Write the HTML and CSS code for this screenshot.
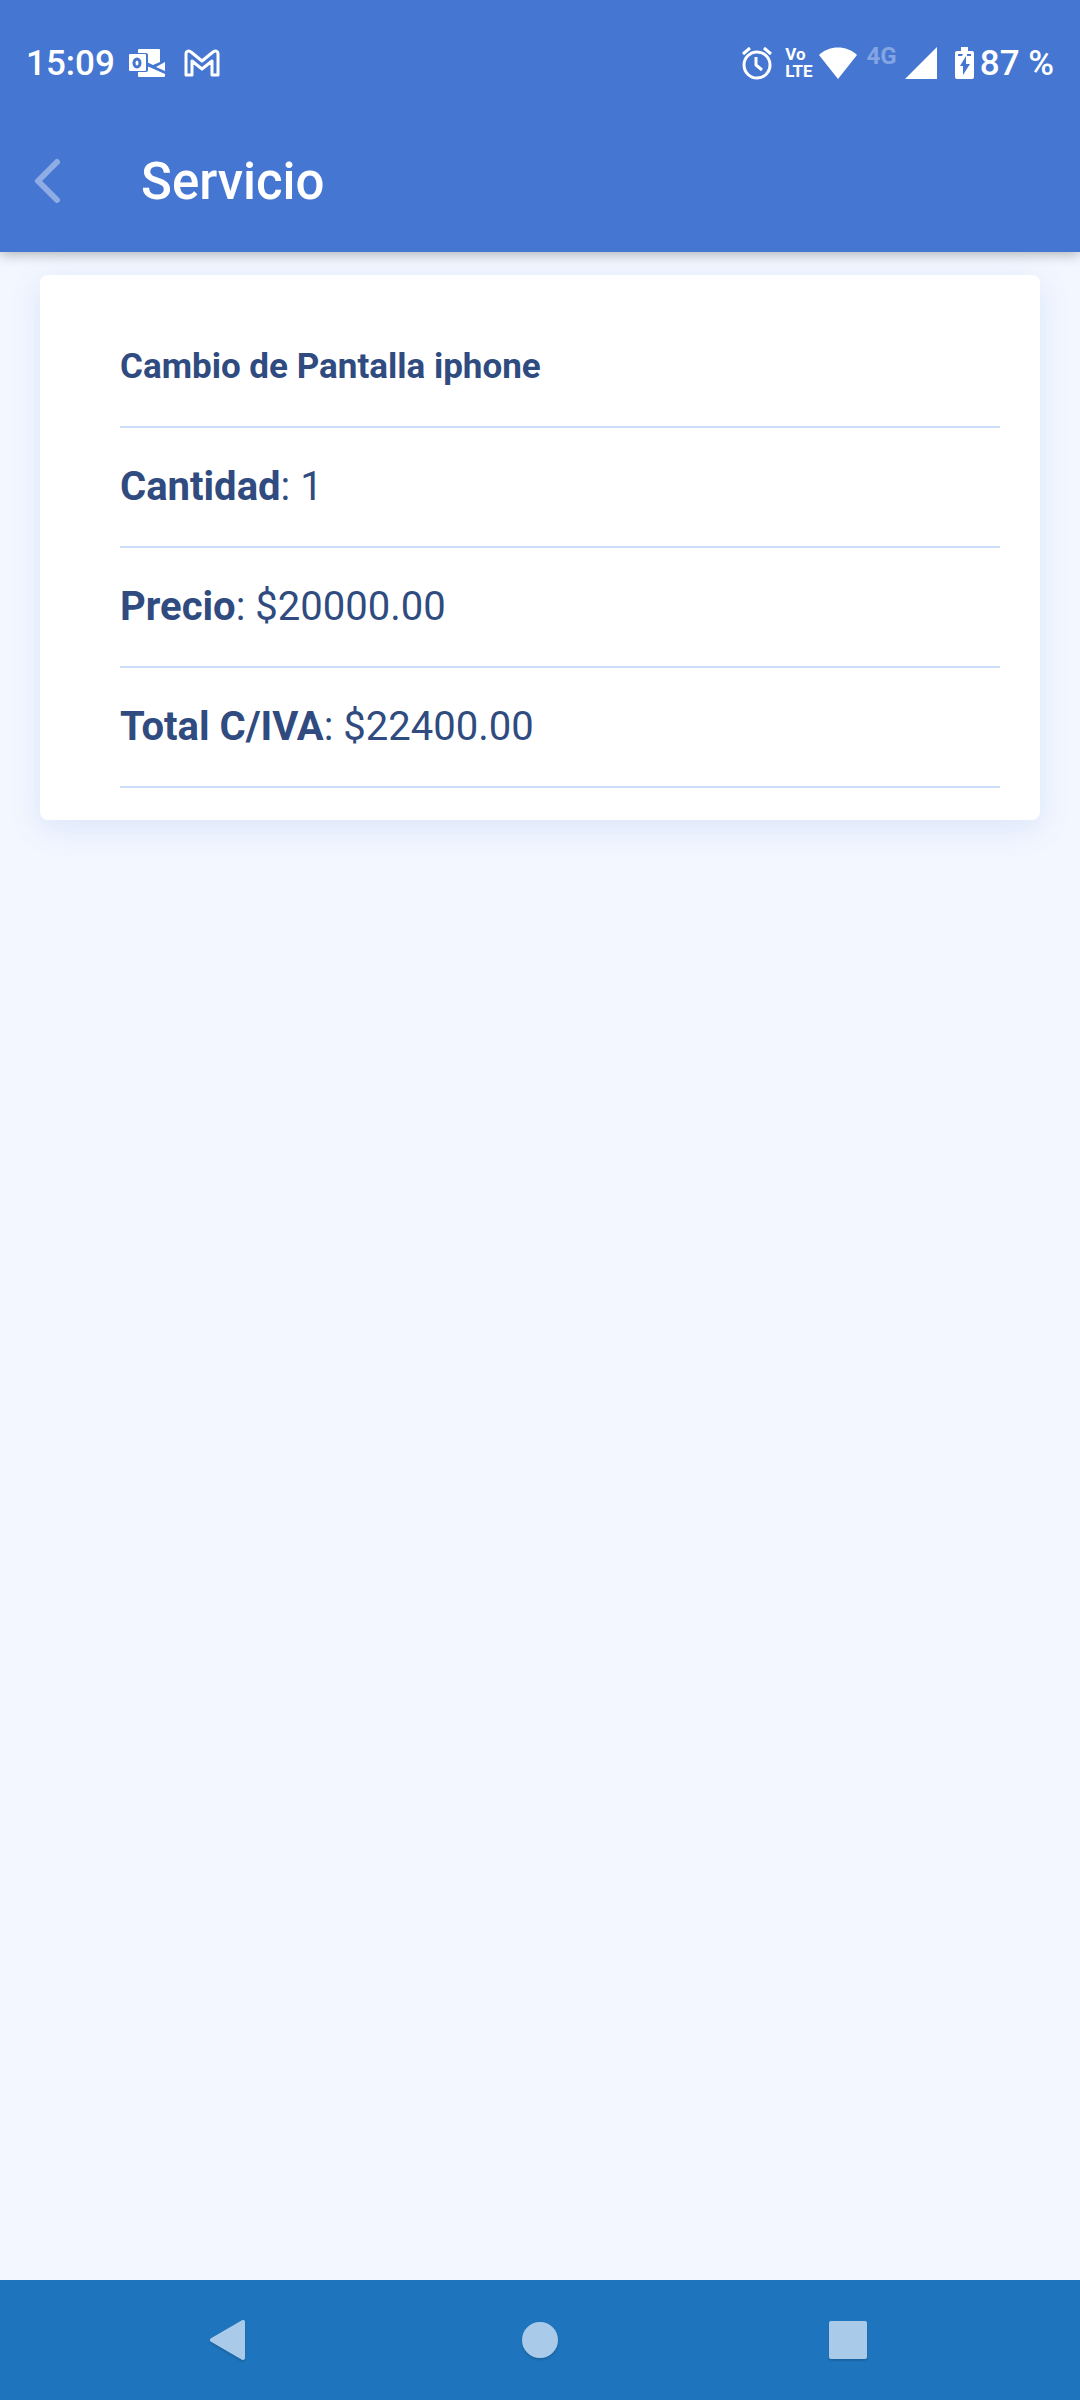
FILE: index.html
```html
<!DOCTYPE html>
<html lang="es">
<head>
  <meta charset="UTF-8" />
  <meta name="viewport" content="width=device-width, initial-scale=1.0"/>
  <title>Servicio</title>
  <link rel="stylesheet" href="styles.css">
</head>
<body>

<header class="header">
  <div class="status-bar">
    <div class="status-left">
      <span class="clock">15:09</span>
      <svg class="outlook" width="36" height="28" viewBox="0 0 36 28">
        <path class="fill" d="M10 0h20a1 1 0 0 1 1 1v12l-7 3-15-7V1a1 1 0 0 1 1-1zM27 18l9-5v9zM9 22h9v-5l18 8v2a1 1 0 0 1-1 1H10a1 1 0 0 1-1-1z"/>
        <rect class="tile" x="-1" y="4" width="20" height="19" rx="2"/>
        <rect class="fill" x="0" y="5" width="17" height="17" rx="1"/>
        <ellipse class="ring" cx="8" cy="14" rx="3" ry="4"/>
      </svg>
      <svg class="gmail" width="36" height="28" viewBox="0 0 36 28">
        <path class="line" d="M2 26V5c0-3 3-4 5-2l11 9 11-9c2-2 5-1 5 2v21h-6V12l-10 8-10-8v14z"/>
      </svg>
    </div>
    <div class="status-right">
      <svg class="alarm" width="32" height="32" viewBox="0 0 32 32">
        <circle class="line" cx="16" cy="18" r="13"/>
        <path class="line" d="M15 10v8l6 5M2 7l7-6M30 7l-7-6"/>
      </svg>
      <span class="volte"><span>Vo</span><span>LTE</span></span>
      <svg class="wifi" width="38" height="32" viewBox="0 0 38 32">
        <path class="fill" d="M0 8C10-2 28-2 38 8L19 32z"/>
      </svg>
      <span class="network">4G</span>
      <svg class="signal" width="32" height="32" viewBox="0 0 32 32">
        <path class="fill" d="M32 0v32H0z"/>
      </svg>
      <svg class="battery" width="19" height="32" viewBox="0 0 19 32">
        <path class="fill" d="M6 0h7v4h4a2 2 0 0 1 2 2v24a2 2 0 0 1-2 2H2a2 2 0 0 1-2-2V6a2 2 0 0 1 2-2h4z"/>
        <path class="hole" d="M3 7h5l-1 2H3zM16 7h-4v2h4zM11 9v8h4L8 28v-9H5z"/>
      </svg>
      <span class="level">87 %</span>
    </div>
  </div>
  <div class="toolbar">
    <button class="back-btn" aria-label="Volver">
      <svg width="28" height="46" viewBox="0 0 28 46">
        <path d="M23 4L4 23l19 19"/>
      </svg>
    </button>
    <h1>Servicio</h1>
  </div>
</header>

<main class="content">
  <div class="card">
    <h2 class="item item-title">Cambio de Pantalla iphone</h2>
    <p class="item"><span><b>Cantidad</b>: 1</span></p>
    <p class="item"><span><b>Precio</b>: $20000.00</span></p>
    <p class="item"><span><b>Total C/IVA</b>: $22400.00</span></p>
  </div>
</main>

<nav class="nav-bar">
  <button aria-label="Atrás">
    <svg width="44" height="44" viewBox="0 0 44 44">
      <path d="M2 22L33 4v36z"/>
    </svg>
  </button>
  <button aria-label="Inicio">
    <svg width="44" height="44" viewBox="0 0 44 44">
      <circle cx="22" cy="22" r="16"/>
    </svg>
  </button>
  <button aria-label="Recientes">
    <svg width="44" height="44" viewBox="0 0 44 44">
      <rect x="5" y="5" width="34" height="34"/>
    </svg>
  </button>
</nav>

</body>
</html>
```

FILE: styles.css
```css
* {
  box-sizing: border-box;
}

body {
  font-family: Roboto, sans-serif;
  margin: 0;
  background: #f3f7ff;
  color: #2f4b7f;
  display: flex;
  flex-direction: column;
  min-height: 100vh;
}

button {
  background: none;
  border: none;
  padding: 0;
  cursor: pointer;
}

svg {
  display: block;
  flex: none;
  overflow: visible;
}

.header {
  background: #4576d1;
  color: white;
  box-shadow: 0 2px 12px rgba(0, 0, 0, 0.3);
}

/* status bar */
.status-bar {
  display: flex;
  justify-content: space-between;
  height: 110px;
  padding: 16px 26px 0;
  font-size: 35px;
  font-weight: 500;
}

.status-left,
.status-right {
  display: flex;
  align-items: center;
}

.outlook {
  margin-left: 14px;
}

.gmail {
  margin-left: 19px;
}

.fill {
  fill: white;
}

.line {
  fill: none;
  stroke: white;
  stroke-width: 3px;
  stroke-linejoin: round;
}

.ring {
  fill: none;
  stroke: #4576d1;
  stroke-width: 3px;
}

.tile,
.hole {
  fill: #4576d1;
}

.volte {
  display: flex;
  flex-direction: column;
  margin: 0 6px 0 12px;
  font-size: 17px;
  line-height: 17px;
  font-weight: 700;
}

.network {
  align-self: flex-start;
  margin: 24px 8px 0 10px;
  font-size: 24px;
  line-height: 32px;
  font-weight: 700;
  color: #83a5e3;
}

.battery {
  margin: 0 6px 0 18px;
}

/* toolbar */
.toolbar {
  display: flex;
  align-items: center;
  height: 142px;
  padding: 0 34px;
}

.back-btn {
  width: 107px;
}

.back-btn path {
  fill: none;
  stroke: #8face4;
  stroke-width: 6px;
  stroke-linecap: round;
  stroke-linejoin: round;
}

.toolbar h1 {
  margin: 0;
  font-size: 51px;
  font-weight: 500;
}

/* content */
.content {
  flex: 1;
  padding: 23px 40px;
}

.card {
  background: white;
  padding: 33px 40px 32px 80px;
  border-radius: 8px;
  box-shadow: 0 8px 32px rgba(69, 118, 209, 0.14);
}

.item {
  display: flex;
  align-items: center;
  height: 120px;
  margin: 0;
  padding-bottom: 2px;
  border-bottom: 2px solid #cddcf7;
  font-size: 40px;
}

.item-title {
  font-size: 35px;
  font-weight: 700;
}

/* navigation buttons */
.nav-bar {
  display: grid;
  grid-template-columns: repeat(3, 1fr);
  height: 120px;
  padding: 0 78px;
  background: #1f75bd;
}

.nav-bar button {
  display: flex;
  align-items: center;
  justify-content: center;
}

.nav-bar svg {
  fill: #a9cae8;
  stroke: #a9cae8;
  stroke-width: 4px;
  stroke-linejoin: round;
  filter: drop-shadow(0 2px 1px rgba(0, 0, 0, 0.15));
}
```
